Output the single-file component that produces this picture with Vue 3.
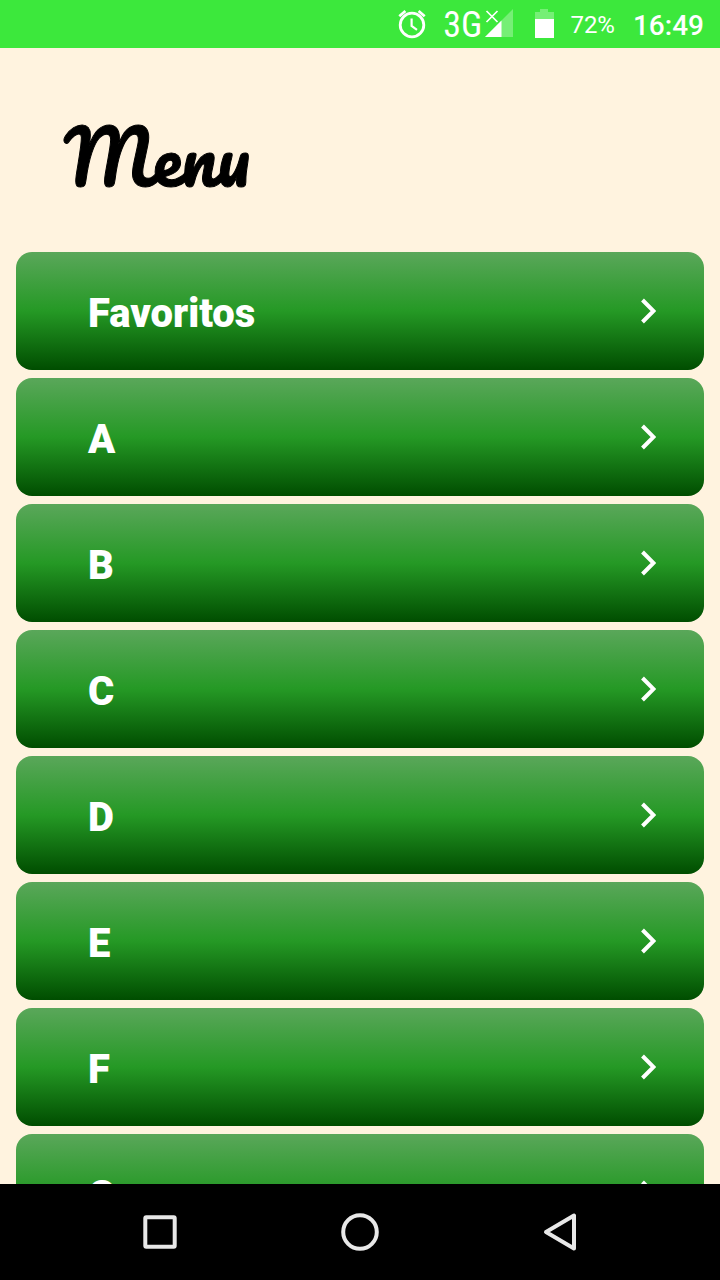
<script setup>
const items = ['Favoritos', 'A', 'B', 'C', 'D', 'E', 'F', 'G']
</script>

<template>
  <div class="screen">
    <div class="status">
      <svg class="alarm" viewBox="0 0 30 32" width="30" height="32" fill="none" stroke="#fff" aria-label="Alarm">
        <circle cx="15" cy="17" r="11.8" stroke-width="2.8" />
        <path d="M14.6 10.5v7.5l5.4 3.8" stroke-width="2.2" />
        <path d="M2.3 8.2 8.4 3M27.7 8.2 21.6 3" stroke-width="2.8" />
      </svg>
      <span class="network">3G</span>
      <svg class="signal" viewBox="0 0 30 32" width="30" height="32" aria-label="Signal">
        <path d="M29 1v28H1z" fill="#fff" opacity=".3" />
        <path d="M17.5 12.5V29H1z" fill="#fff" />
        <path d="m2.5 3 11 11M13.5 3l-11 11" stroke="#fff" stroke-width="1.7" />
      </svg>
      <svg class="battery" viewBox="0 0 20 32" width="20" height="32" aria-label="Battery">
        <path d="M1 4h5V1h8v3h6v7H1z" fill="#fff" opacity=".3" />
        <path d="M1 11h19v19H1z" fill="#fff" />
      </svg>
      <span class="percent">72%</span>
      <time class="clock">16:49</time>
    </div>

    <header class="header">
      <h1>Menu</h1>
    </header>

    <main class="list">
      <button v-for="item in items" :key="item" class="row" type="button">
        <span>{{ item }}</span>
        <svg viewBox="0 0 16 26" width="16" height="26" fill="none" stroke="#fff" stroke-width="4">
          <path d="m2.5 2 11 11-11 11" />
        </svg>
      </button>
    </main>

    <nav class="navbar">
      <button type="button" aria-label="Recent apps">
        <svg viewBox="0 0 40 40" width="40" height="40" fill="none" stroke="#e8e8e8" stroke-width="4" stroke-linejoin="round">
          <rect x="5.3" y="5.3" width="29.4" height="29.4" rx="1" />
        </svg>
      </button>
      <button type="button" aria-label="Home">
        <svg viewBox="0 0 40 40" width="40" height="40" fill="none" stroke="#e8e8e8" stroke-width="4">
          <circle cx="20" cy="20" r="16.8" />
        </svg>
      </button>
      <button type="button" aria-label="Back">
        <svg viewBox="0 0 40 40" width="40" height="40" fill="none" stroke="#e8e8e8" stroke-width="4" stroke-linejoin="round">
          <path d="M34 3.6v32.8L6 20z" />
        </svg>
      </button>
    </nav>
  </div>
</template>

<style>
body {
  margin: 0;
}
</style>

<style scoped>
.screen {
  display: flex;
  flex-direction: column;
  height: 100vh;
  overflow: hidden;
  background: #fff3df;
  font-family: Roboto, "Liberation Sans", sans-serif;
}
.status {
  display: flex;
  flex: none;
  align-items: center;
  justify-content: flex-end;
  height: 48px;
  padding-right: 16px;
  background: #3ce83c;
  color: #fff;
}
.alarm {
  margin-right: 16px;
}
.network {
  padding-top: 2px;
  font-family: "Roboto Condensed", "Noto Sans", sans-serif;
  font-size: 36px;
  font-weight: 400;
  line-height: 44px;
}
.signal {
  margin: 0 20px 0 2px;
}
.percent {
  margin: 0 18px 0 16px;
  padding-top: 2px;
  font-size: 24px;
  line-height: 44px;
}
.clock {
  padding-top: 4px;
  font-size: 28px;
  font-weight: 500;
  line-height: 44px;
}
.header {
  flex: none;
  padding: 61px 64px 47px;
}
h1 {
  margin: 0;
  color: #000;
  font-family: Pacifico, Lato, sans-serif;
  font-size: 72px;
  font-weight: 400;
  line-height: 96px;
  -webkit-text-stroke: 1px #000;
}
.list {
  display: flex;
  flex: 1;
  flex-direction: column;
  gap: 8px;
  min-height: 0;
  padding: 0 16px;
  overflow: hidden;
}
.row {
  display: flex;
  flex: none;
  align-items: center;
  justify-content: space-between;
  height: 118px;
  padding: 0 48px 0 72px;
  border: 0;
  border-radius: 16px;
  background: linear-gradient(#5aa75a, #259925 50%, #004d00);
  color: #fff;
  font-family: inherit;
  font-size: 40px;
  font-weight: 900;
  text-align: left;
}
.row span {
  padding-top: 4px;
}
.navbar {
  display: flex;
  flex: none;
  align-items: center;
  justify-content: center;
  gap: 160px;
  height: 96px;
  background: #000;
}
.navbar button {
  padding: 0;
  border: 0;
  background: none;
}
.navbar svg,
.status svg {
  display: block;
  flex: none;
}
</style>
